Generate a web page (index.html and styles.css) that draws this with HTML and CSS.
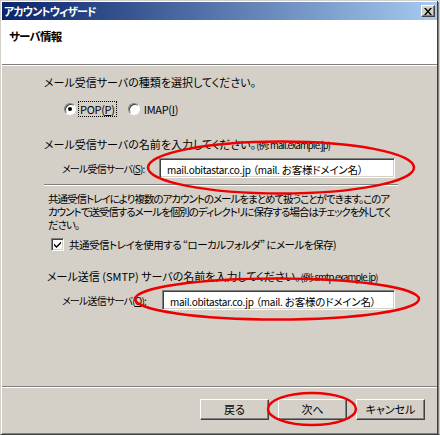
FILE: index.html
```html
<!DOCTYPE html>
<html lang="ja">
<head>
<meta charset="utf-8">
<title>アカウントウィザード</title>
<link rel="stylesheet" href="styles.css">
</head>
<body>
<div class="window">
  <div class="titlebar">
    <span class="title">アカウントウィザード</span>
    <span class="close">
      <svg width="8" height="7" viewBox="0 0 8 7"><path d="M0 0h2l2 2.5L6 0h2L5 3.5 8 7H6L4 4.5 2 7H0l3-3.5z" fill="#000"/></svg>
    </span>
  </div>
  <div class="header">
    <h1 class="heading">サーバ情報</h1>
  </div>
  <div class="hsep"></div>
  <div class="content">
    <p class="q q1">メール受信サーバの種類を選択してください。</p>
    <div class="radios">
      <span class="radio checked"><span class="dot"></span></span>
      <span class="rlabel focus">POP(<u>P</u>)</span>
      <span class="radio imap"></span>
      <span class="rlabel">IMAP(<u>I</u>)</span>
    </div>
    <p class="q q2">メール受信サーバの名前を入力してください。<span class="ex">(例: mail.example.jp)</span></p>
    <div class="field">
      <span class="flabel">メール受信サーバ(<u>S</u>):</span>
      <span class="input"><span class="lat">mail.obitastar.co.jp</span> （<span class="lat">mail.</span> お客様ドメイン名）</span>
    </div>
    <div class="sep"></div>
    <p class="para">共通受信トレイにより複数のアカウントのメールをまとめて扱うことができます。このア<br>カウントで送受信するメールを個別のディレクトリに保存する場合はチェックを外してく<br>ださい。</p>
    <div class="check-row">
      <span class="checkbox">
        <svg width="9" height="9" viewBox="0 0 9 9"><path d="M1 3.5l2.5 2.5L8 1.5v2L3.5 8 1 5.5z" fill="#000"/></svg>
      </span>
      <span class="clabel">共通受信トレイを使用する “ローカルフォルダ” にメールを保存)</span>
    </div>
    <p class="q q3">メール送信 (SMTP) サーバの名前を入力してください。<span class="ex">(例: smtp.example.jp)</span></p>
    <div class="field field2">
      <span class="flabel">メール送信サーバ(<u>O</u>):</span>
      <span class="input"><span class="lat">mail.obitastar.co.jp</span> （<span class="lat">mail.</span> お客様のドメイン名）</span>
    </div>
  </div>
  <div class="fsep"></div>
  <div class="buttons">
    <span class="btn">戻る</span>
    <span class="btn">次へ</span>
    <span class="btn">キャンセル</span>
  </div>
  <svg class="marks" width="440" height="435" viewBox="0 0 440 435">
    <ellipse cx="281" cy="167.5" rx="133" ry="26" fill="none" stroke="#ee0000" stroke-width="2.5"/>
    <ellipse cx="277" cy="299" rx="142" ry="20.5" fill="none" stroke="#ee0000" stroke-width="2.5"/>
    <ellipse cx="312" cy="409" rx="44" ry="16" fill="none" stroke="#ee0000" stroke-width="2.5"/>
  </svg>
</div>
</body>
</html>
```

FILE: styles.css
```css
* { box-sizing: border-box; }
html, body { margin: 0; padding: 0; }
body {
  background: #d4d0c8;
  font-family: "Noto Sans CJK JP", "Noto Sans", sans-serif;
  font-size: 11px;
  line-height: 13px;
  color: #000;
  font-feature-settings: "palt";
}
.window {
  position: relative;
  width: 440px;
  height: 435px;
  display: flex;
  flex-direction: column;
  background: #d4d0c8;
  border-left: 1px solid #d4d0c8;
  border-top: 1px solid #d4d0c8;
  border-right: 1px solid #d4d0c8;
  border-bottom: 1px solid #404040;
  padding: 1px 2px 2px 1px;
  box-shadow: inset 1px 1px 0 #fff, inset -1px -1px 0 #808080;
}
.window::after {
  content: "";
  position: absolute;
  right: 1px;
  top: 0;
  bottom: 0;
  width: 1px;
  background: #404040;
}
.titlebar {
  height: 18px;
  flex: none;
  display: flex;
  align-items: center;
  justify-content: space-between;
  background: linear-gradient(to right, #0a246a, #a6caf0);
  padding: 0 2px 0 2px;
}
.title {
  color: #fff;
  font-weight: bold;
  font-size: 11px;
  letter-spacing: -0.9px;
}
.close {
  width: 14px;
  height: 12px;
  display: flex;
  align-items: center;
  justify-content: center;
  background: #d4d0c8;
  border: 1px solid;
  border-color: #fff #404040 #404040 #fff;
  box-shadow: inset -1px -1px 0 #808080;
}
.header {
  height: 44px;
  flex: none;
  background: #fff;
  padding: 9px 0 0 7px;
}
.heading {
  margin: 0;
  font-size: 11.5px;
  font-weight: bold;
  line-height: 14px;
  letter-spacing: -0.8px;
}
.hsep {
  flex: none;
  height: 2px;
  border-top: 1px solid #808080;
  border-bottom: 1px solid #fff;
}
.content {
  flex: 1;
  padding: 0 0 0 42px;
}
.q { margin: 0; white-space: nowrap; }
.ex {
  font-size: 9.5px;
  letter-spacing: -0.9px;
}
.q1 { margin-top: 10px; }
.radios {
  display: flex;
  align-items: center;
  height: 16px;
  margin-top: 12px;
  padding-left: 20px;
}
.radio {
  width: 12px;
  height: 12px;
  border-radius: 50%;
  background: #fff;
  border: 1px solid;
  border-color: #808080 #fff #fff #808080;
  box-shadow: inset 1px 1px 0 #404040;
  display: flex;
  align-items: center;
  justify-content: center;
}
.dot { width: 4px; height: 4px; border-radius: 50%; background: #000; }
.rlabel {
  margin-left: 2px;
  padding: 0 1px;
  line-height: 14px;
  border: 1px solid transparent;
  letter-spacing: -0.3px;
}
.rlabel.focus { border: 1px dotted #000; }
.radio.imap { margin-left: 11px; }
.q2 { margin-top: 21px; }
.field {
  display: flex;
  align-items: center;
  margin-top: 6px;
  padding-left: 18px;
}
.flabel {
  flex: none;
  width: 93px;
  white-space: nowrap;
  font-size: 10px;
  letter-spacing: -0.8px;
}
.input {
  flex: none;
  margin-left: 4px;
  width: 236px;
  height: 20px;
  background: #fff;
  border: 1px solid;
  border-color: #808080 #fff #fff #808080;
  box-shadow: inset 1px 1px 0 #404040, inset -1px -1px 0 #d4d0c8;
  padding: 4px 0 0 7px;
  white-space: nowrap;
  font-size: 10.5px;
  line-height: 13px;
  letter-spacing: -0.2px;
}
.lat { font-size: 10px; letter-spacing: -0.3px; }
.sep {
  width: 354px;
  height: 2px;
  margin-top: 6px;
  border-top: 1px solid #808080;
  border-bottom: 1px solid #fff;
}
.para {
  margin: 6px 0 0 4px;
  white-space: nowrap;
  font-size: 10.5px;
  letter-spacing: -1px;
}
.check-row {
  display: flex;
  align-items: center;
  margin-top: 7px;
  padding-left: 7px;
  height: 13px;
}
.checkbox {
  width: 13px;
  height: 13px;
  background: #fff;
  border: 1px solid;
  border-color: #808080 #fff #fff #808080;
  box-shadow: inset 1px 1px 0 #404040, inset -1px -1px 0 #d4d0c8;
  display: flex;
  align-items: center;
  justify-content: center;
}
.clabel {
  margin-left: 5px;
  white-space: nowrap;
  font-size: 10.5px;
  letter-spacing: -0.5px;
}
.q3 { margin-top: 19px; margin-left: 3px; }
.field2 .input { margin-left: 7px; width: 233px; }
.fsep {
  flex: none;
  height: 2px;
  border-top: 1px solid #808080;
  border-bottom: 1px solid #fff;
}
.buttons {
  flex: none;
  height: 44px;
  display: flex;
  justify-content: flex-end;
  gap: 9px;
  padding: 11px 12px 0 0;
}
.btn {
  width: 69px;
  height: 21px;
  display: flex;
  align-items: center;
  justify-content: center;
  border: 1px solid;
  border-color: #fff #404040 #404040 #fff;
  box-shadow: inset -1px -1px 0 #808080;
  background: #d4d0c8;
}
.marks {
  position: absolute;
  left: -1px;
  top: -1px;
  pointer-events: none;
}
```
